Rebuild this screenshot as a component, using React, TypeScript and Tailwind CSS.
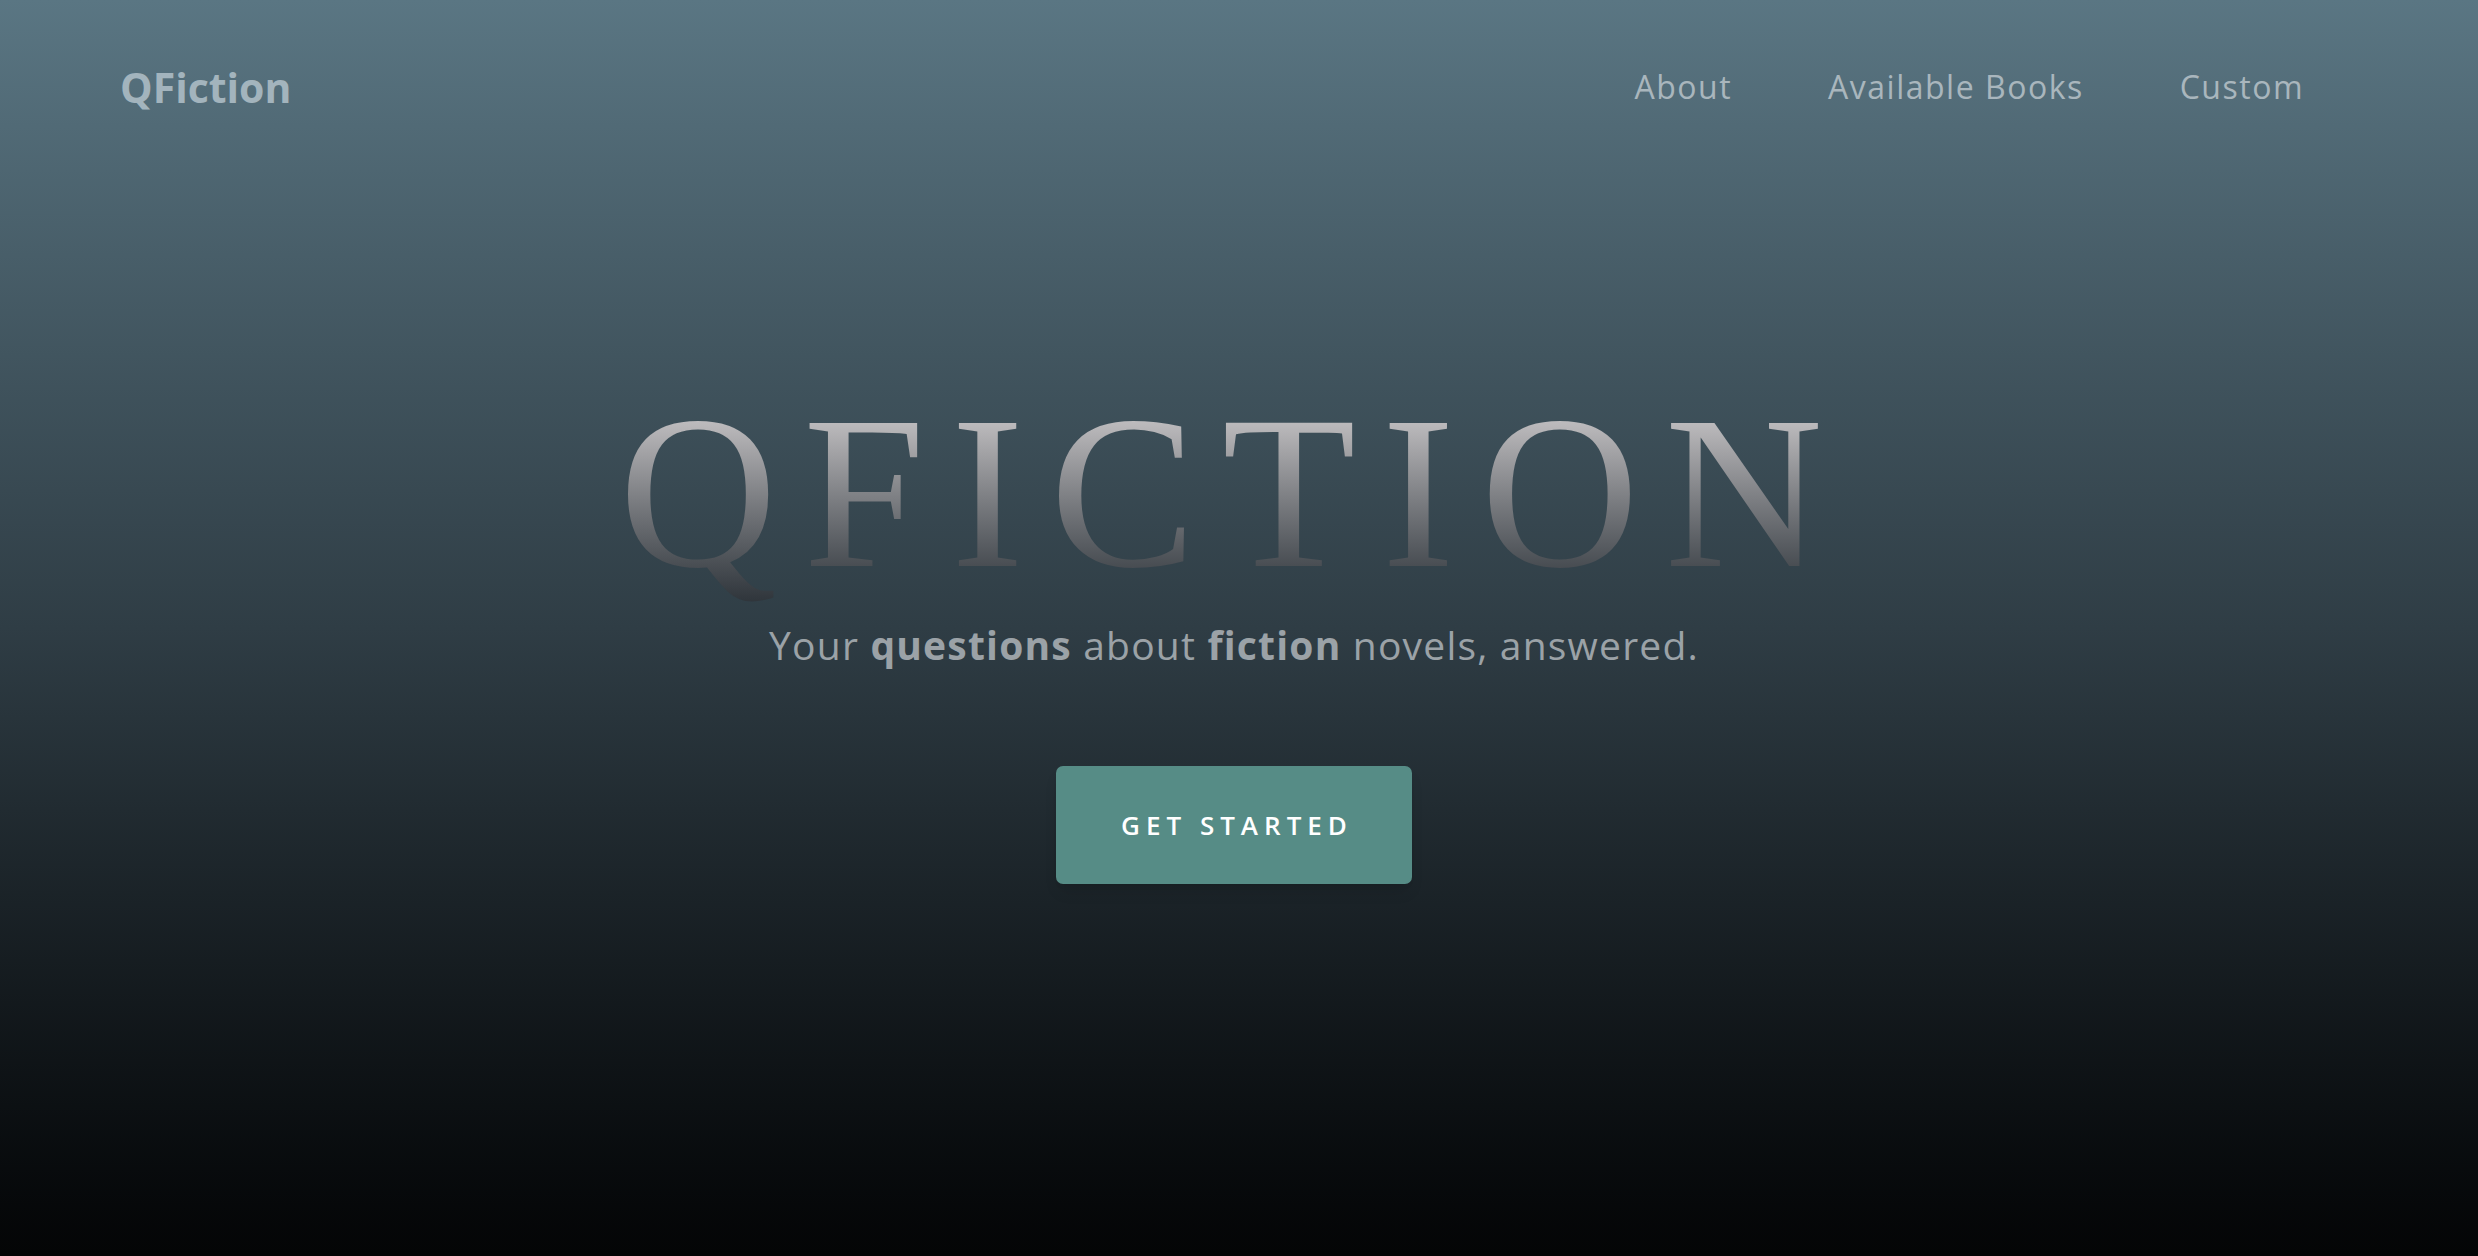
const navLinks = ["About", "Available Books", "Custom"]

export default function App() {
  return (
    <div className="flex min-h-screen w-full flex-col bg-linear-to-b from-[#5a7683] via-[#2f3d45] to-[#040506] font-['Open_Sans',sans-serif]">
      {/* Header */}
      <header className="flex h-[174px] items-center justify-between pr-[174px] pl-[120px]">
        <a href="#" className="text-[41px] leading-none font-bold text-[#a3b4bd]">
          QFiction
        </a>
        <nav className="flex items-center gap-[96px]">
          {navLinks.map((link) => (
            <a
              key={link}
              href="#"
              className="text-[32px] leading-none tracking-[1.5px] text-[#a9b6bd]"
            >
              {link}
            </a>
          ))}
        </nav>
      </header>

      {/* Hero */}
      <main className="flex flex-col items-center pt-[209px] pr-[10px]">
        <h1 className="bg-linear-to-b from-[#c2c0c2] from-[15%] to-[#2f353b] bg-clip-text font-['Liberation_Serif',serif] text-[219px] leading-none tracking-[26px] text-transparent">
          QFICTION
        </h1>
        <p className="mt-[23px] text-[39px] leading-none tracking-[1.2px] text-[#9ba2a7]">
          Your <span className="font-bold">questions</span> about{" "}
          <span className="font-bold">fiction</span> novels, answered.
        </p>
        <button className="mt-[102px] flex h-[118px] w-[356px] items-center justify-center rounded-[7px] bg-[#568c86] pl-[6px] text-[26px] font-semibold tracking-[6px] text-white shadow-lg">
          GET STARTED
        </button>
      </main>
    </div>
  )
}
